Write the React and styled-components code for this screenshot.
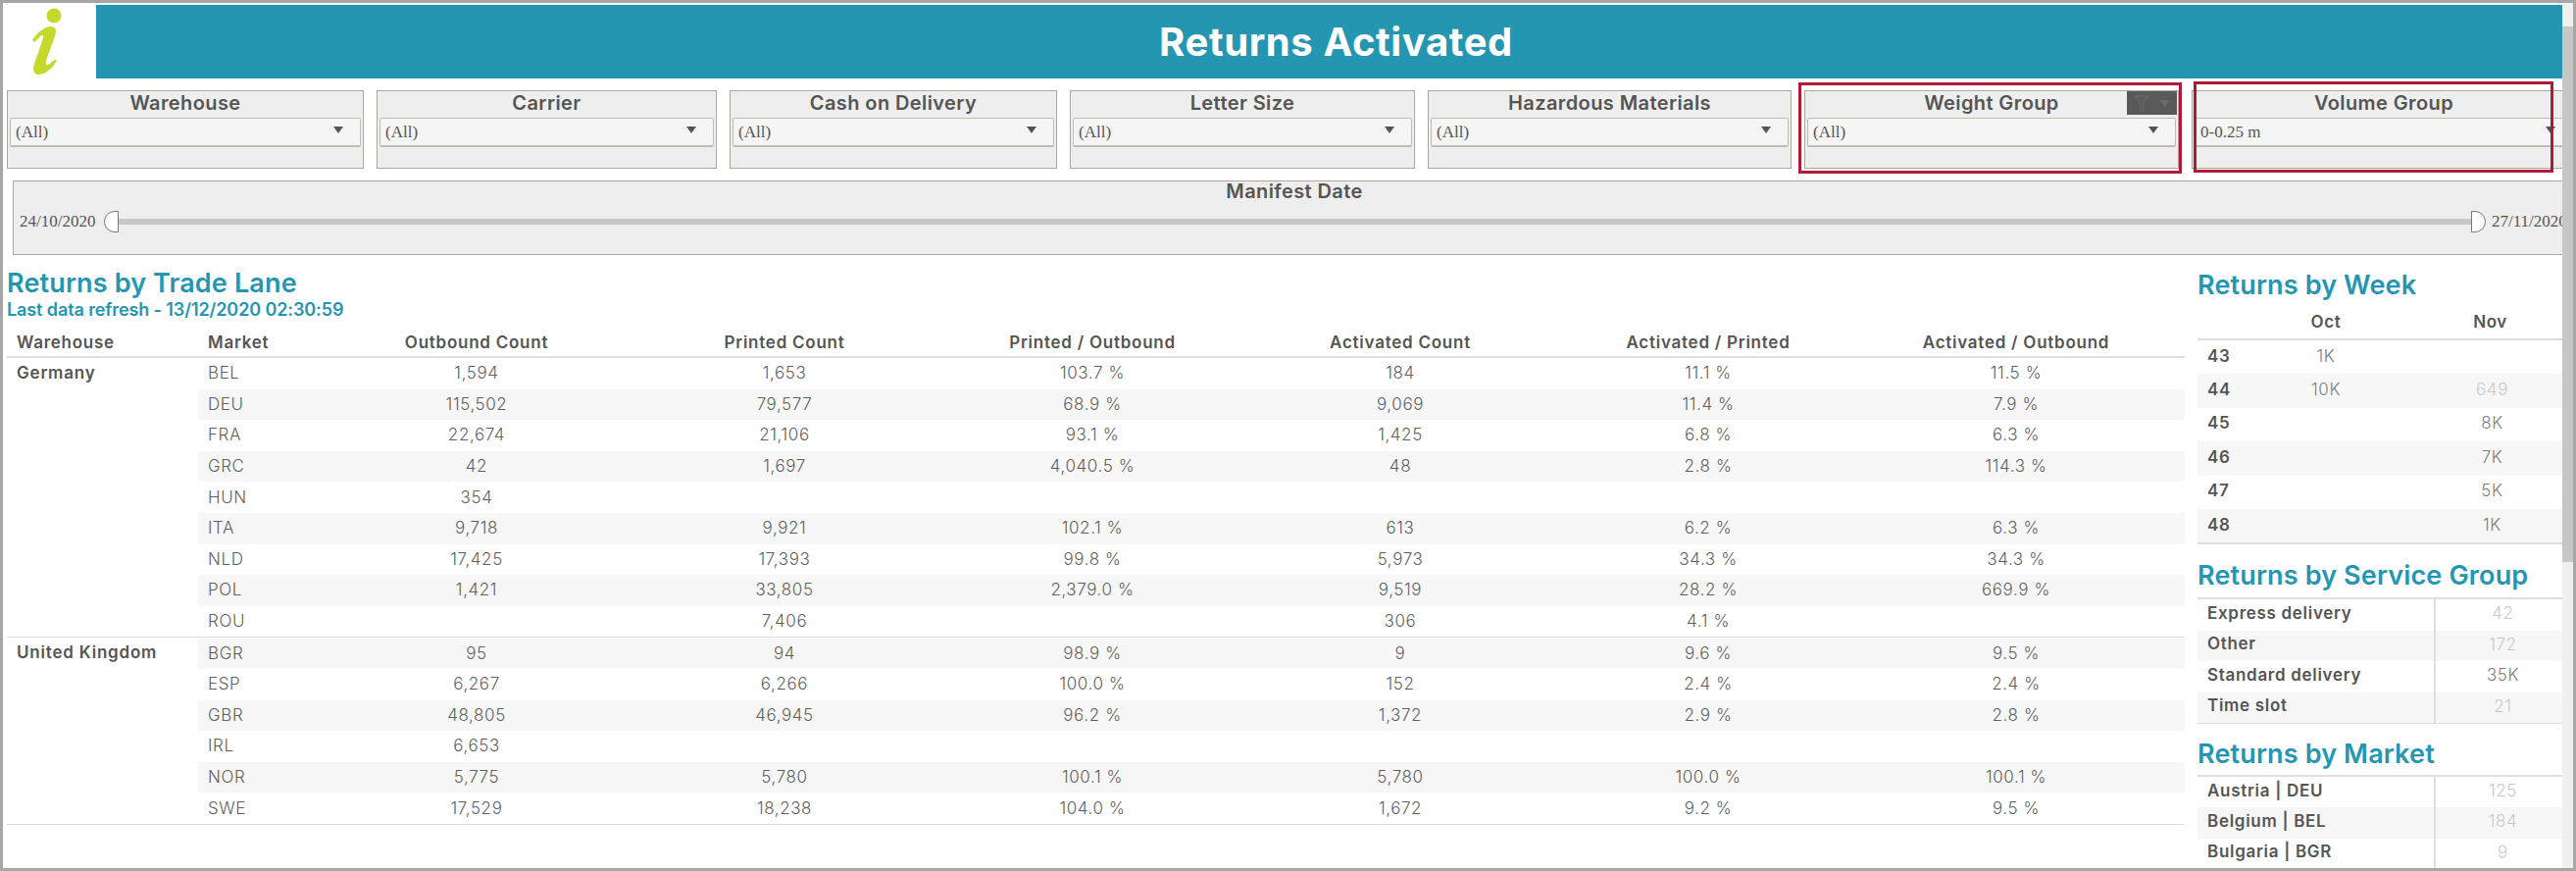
import React from "react";
import styled, { createGlobalStyle } from "styled-components";

const Global = createGlobalStyle`
  html, body { margin: 0; padding: 0; background: #fff; overflow: hidden; }
  * { box-sizing: border-box; }
`;

const SANS = `Inter, "Open Sans", "Liberation Sans", sans-serif`;
const SERIF = `"Liberation Serif", serif`;
const TEAL = "#2596b2";
const INK = "#555555";

const Page = styled.div`
  width: 2627px;
  height: 888px;
  border: 3px solid #a6a6a6;
  display: flex;
  background: #fff;
  overflow: hidden;
  font-family: ${SANS};
  color: ${INK};
`;

const Main = styled.main`
  width: 2610px;
  height: 882px;
  overflow: hidden;
  padding-top: 2px;
`;

const ScrollTrack = styled.div`
  width: 11px;
  height: 882px;
  background: #f0f0f0;
  padding-top: 24px;
`;

const ScrollThumb = styled.div`
  height: 546px;
  background: #c6c6c6;
`;

const Header = styled.header`
  display: flex;
  height: 75px;
`;

const LogoBox = styled.div`
  width: 95px;
  height: 75px;
  flex: none;
`;

const Banner = styled.div`
  flex: 1;
  background: ${TEAL};
  color: #fff;
  font-size: 40px;
  font-weight: 700;
  letter-spacing: 0.6px;
  display: flex;
  align-items: center;
  justify-content: center;
  padding-left: 14px;
`;

const FilterRow = styled.div`
  display: flex;
  gap: 13px;
  margin: 12px 0 0 4px;
  width: 2620px;
`;

const FilterCard = styled.section`
  position: relative;
  width: ${(p) => p.$width}px;
  height: 80px;
  flex: none;
  background: #eeeeee;
  border: 1px solid #a9a797;
  padding: 0 2px;
`;

const CardTitle = styled.h3`
  margin: 0;
  height: 27px;
  font-size: 20px;
  font-weight: 600;
  line-height: 25px;
  letter-spacing: 0.4px;
  text-align: center;
  color: ${INK};
`;

const Select = styled.div`
  height: 30px;
  background: #f5f5f5;
  border: 1px solid #bdbdb5;
  border-bottom-width: 2px;
  border-radius: 2px;
  display: flex;
  align-items: center;
  justify-content: space-between;
  padding: 0 17px 0 5px;
  font-family: ${SERIF};
  font-size: 17px;
  color: ${INK};
`;

const Caret = styled.span`
  width: 0;
  height: 0;
  border-left: 5px solid transparent;
  border-right: 5px solid transparent;
  border-top: 7px solid ${INK};
  margin-top: -4px;
`;

const RedFrame = styled.div`
  position: absolute;
  left: ${(p) => p.$l}px;
  right: ${(p) => p.$r}px;
  top: ${(p) => p.$t}px;
  bottom: ${(p) => p.$b}px;
  border: 3px solid #b01a38;
  pointer-events: none;
`;

const HoverTools = styled.div`
  position: absolute;
  top: 0;
  right: 1px;
  width: 51px;
  height: 24px;
  background: #595959;
  display: flex;
  align-items: center;
  justify-content: center;
  gap: 11px;
`;

const SliderCard = styled.section`
  margin: 12px 0 0 10px;
  width: 2614px;
  height: 76px;
  background: #eeeeee;
  border: 1px solid #a9a797;
`;

const SliderTitle = styled(CardTitle)`
  height: 30px;
  line-height: 21px;
`;

const SliderRow = styled.div`
  display: flex;
  align-items: center;
  height: 22px;
  padding-left: 6px;
  font-family: ${SERIF};
  font-size: 17px;
  color: ${INK};
`;

const DateText = styled.span`
  width: ${(p) => p.$width}px;
  padding-left: ${(p) => p.$inset || 0}px;
  flex: none;
  white-space: nowrap;
`;

const Handle = styled.span`
  width: 15px;
  height: 22px;
  flex: none;
  background: #fff;
  border: 1px solid #777;
  border-radius: ${(p) => (p.$side === "left" ? "11px 0 0 11px" : "0 11px 11px 0")};
`;

const Track = styled.div`
  width: 2399px;
  height: 6px;
  flex: none;
  background: #c8c8c8;
`;

const Content = styled.div`
  display: flex;
  gap: 13px;
  padding-left: 4px;
`;

const LeftPane = styled.div`
  width: 2221px;
  flex: none;
  padding-top: 13px;
`;

const RightPane = styled.aside`
  flex: 1;
  padding-top: 15px;
`;

const PaneTitle = styled.h2`
  margin: 0;
  font-size: 27px;
  line-height: 32px;
  font-weight: 600;
  letter-spacing: 0.15px;
  color: ${TEAL};
  white-space: nowrap;
`;

const Refresh = styled.div`
  font-size: 18px;
  line-height: 22px;
  font-weight: 600;
  letter-spacing: -0.1px;
  color: ${TEAL};
`;

const TradeHead = styled.div`
  height: 38px;
  padding-top: 7px;
  border-bottom: 2px solid #dedede;
  display: grid;
  grid-template-columns: 195px 127px repeat(6, 314px);
  align-items: center;
  font-size: 17px;
  font-weight: 600;
  letter-spacing: 0.75px;
`;

const HeadCell = styled.div`
  text-align: ${(p) => (p.$center ? "center" : "left")};
  padding-left: ${(p) => (p.$center ? 0 : 10)}px;
  white-space: nowrap;
`;

const Group = styled.div`
  display: grid;
  grid-template-columns: 195px 1fr;
  border-bottom: 1.5px solid #dedede;
`;

const GroupName = styled.div`
  font-size: 17px;
  font-weight: 600;
  line-height: 30px;
  letter-spacing: 0.8px;
  padding-left: 10px;
`;

const TradeRow = styled.div`
  display: grid;
  grid-template-columns: 127px repeat(6, 314px);
  height: 31.6px;
  align-items: center;
  padding-bottom: 1px;
  background: ${(p) => (p.$striped ? "#f7f7f7" : "transparent")};
  font-size: 17px;
  font-weight: 300;
  letter-spacing: 0.6px;
  color: #5f5f5f;
`;

const MarketCell = styled.div`
  padding-left: 10px;
`;

const ValueCell = styled.div`
  text-align: center;
`;

const WeekHead = styled.div`
  height: 40px;
  padding-top: 4px;
  border-bottom: 2.5px solid #dedede;
  display: grid;
  grid-template-columns: 64px 134px 173px;
  align-items: center;
  font-size: 17px;
  font-weight: 600;
  letter-spacing: 0.6px;
  text-align: center;
  & > *:nth-child(3) { padding-left: 28px; }
`;

const WeekRow = styled.div`
  display: grid;
  grid-template-columns: 64px 134px 173px;
  height: 34.4px;
  align-items: center;
  padding-bottom: 3px;
  background: ${(p) => (p.$striped ? "#f7f7f7" : "transparent")};
  font-size: 17px;
  letter-spacing: 0.6px;
  text-align: center;
  & > *:nth-child(3) { padding-left: 32px; }
`;

const RowLabel = styled.div`
  padding-left: 10px;
  font-weight: 600;
  letter-spacing: 0.7px;
  text-align: left;
  white-space: nowrap;
`;

const Measure = styled.div`
  font-weight: 300;
  color: ${(p) => (p.$faint ? "#c8c8c8" : "#7d7d7d")};
`;

const TableEnd = styled.div`
  height: 2px;
  background: #dedede;
`;

const SectionTitle = styled(PaneTitle)`
  margin-top: ${(p) => p.$top}px;
`;

const SummaryTable = styled.div`
  margin-top: ${(p) => p.$top}px;
  border-top: 2px solid #dedede;
  border-bottom: 1.5px solid #dedede;
`;

const SummaryRow = styled.div`
  display: grid;
  grid-template-columns: 241px 1fr;
  height: 31.4px;
  align-items: center;
  background: ${(p) => (p.$striped ? "#f7f7f7" : "transparent")};
  font-size: 17px;
  letter-spacing: 0.6px;
  & > *:first-child { padding-bottom: 4px; }
  & > *:last-child {
    height: 100%;
    line-height: 28px;
    border-left: 2px solid #dedede;
    padding-left: 8px;
    text-align: center;
  }
`;

const Logo = () => (
  <svg width="95" height="75" viewBox="3 5 95 75" aria-hidden="true">
    <circle cx="55" cy="16" r="7.5" fill="#c5d92d" />
    <path
      d="M33 41 C38 33 46 27 52 27 C57 27 58 31 56 37 L47 62 C46 66 48 67 51 65 C53 63 56 60 58 61 C56 67 47 76 40 76 C34 76 33 71 35 65 L44 39 C45 35 43 35 41 37 L35 43 Z"
      fill="#c5d92d"
    />
  </svg>
);

const Funnel = () => (
  <svg width="14" height="16" viewBox="0 0 14 16" aria-hidden="true">
    <path d="M1 1 H13 L8.5 7.5 V15 H5.5 V7.5 Z" fill="none" stroke="#666" strokeWidth="1.5" />
  </svg>
);

const MiniCaret = () => (
  <svg width="11" height="7" viewBox="0 0 11 7" aria-hidden="true">
    <path d="M0 0 H11 L5.5 7 Z" fill="#696969" />
  </svg>
);

const filters = [
  { id: "w", title: "Warehouse", value: "(All)", width: 364 },
  { id: "c", title: "Carrier", value: "(All)", width: 347 },
  { id: "d", title: "Cash on Delivery", value: "(All)", width: 334 },
  { id: "l", title: "Letter Size", value: "(All)", width: 352 },
  { id: "h", title: "Hazardous Materials", value: "(All)", width: 371 },
  { id: "g", title: "Weight Group", value: "(All)", width: 382, hover: true, frame: { l: -7, r: -4, t: -9, b: -6 } },
  { id: "v", title: "Volume Group", value: "0-0.25 m", width: 392, frame: { l: 1, r: 22, t: -10, b: -5 } },
];

const columns = ["Outbound Count", "Printed Count", "Printed / Outbound", "Activated Count", "Activated / Printed", "Activated / Outbound"];

const groups = [
  {
    name: "Germany",
    rows: [
      ["BEL", "1,594", "1,653", "103.7 %", "184", "11.1 %", "11.5 %"],
      ["DEU", "115,502", "79,577", "68.9 %", "9,069", "11.4 %", "7.9 %"],
      ["FRA", "22,674", "21,106", "93.1 %", "1,425", "6.8 %", "6.3 %"],
      ["GRC", "42", "1,697", "4,040.5 %", "48", "2.8 %", "114.3 %"],
      ["HUN", "354", "", "", "", "", ""],
      ["ITA", "9,718", "9,921", "102.1 %", "613", "6.2 %", "6.3 %"],
      ["NLD", "17,425", "17,393", "99.8 %", "5,973", "34.3 %", "34.3 %"],
      ["POL", "1,421", "33,805", "2,379.0 %", "9,519", "28.2 %", "669.9 %"],
      ["ROU", "", "7,406", "", "306", "4.1 %", ""],
    ],
  },
  {
    name: "United Kingdom",
    offset: 9,
    rows: [
      ["BGR", "95", "94", "98.9 %", "9", "9.6 %", "9.5 %"],
      ["ESP", "6,267", "6,266", "100.0 %", "152", "2.4 %", "2.4 %"],
      ["GBR", "48,805", "46,945", "96.2 %", "1,372", "2.9 %", "2.8 %"],
      ["IRL", "6,653", "", "", "", "", ""],
      ["NOR", "5,775", "5,780", "100.1 %", "5,780", "100.0 %", "100.1 %"],
      ["SWE", "17,529", "18,238", "104.0 %", "1,672", "9.2 %", "9.5 %"],
    ],
  },
];

const weeks = [
  ["43", "1K", ""],
  ["44", "10K", "649", true],
  ["45", "", "8K"],
  ["46", "", "7K"],
  ["47", "", "5K"],
  ["48", "", "1K"],
];

const services = [
  ["Express delivery", "42", true],
  ["Other", "172", true],
  ["Standard delivery", "35K", false],
  ["Time slot", "21", true],
];

const markets = [
  ["Austria | DEU", "125", true],
  ["Belgium | BEL", "184", true],
  ["Bulgaria | BGR", "9", true],
];

const Summary = ({ rows, top }) => (
  <SummaryTable $top={top}>
    {rows.map(([label, value, faint], i) => (
      <SummaryRow key={label} $striped={i % 2 === 1}>
        <RowLabel>{label}</RowLabel>
        <Measure $faint={faint}>{value}</Measure>
      </SummaryRow>
    ))}
  </SummaryTable>
);

export default function App() {
  return (
    <Page>
      <Global />
      <Main>
        <Header>
          <LogoBox>
            <Logo />
          </LogoBox>
          <Banner>Returns Activated</Banner>
        </Header>

        <FilterRow>
          {filters.map((f) => (
            <FilterCard key={f.id} $width={f.width}>
              <CardTitle>{f.title}</CardTitle>
              <Select>
                <span>{f.value}</span>
                <Caret />
              </Select>
              {f.hover && (
                <HoverTools>
                  <Funnel />
                  <MiniCaret />
                </HoverTools>
              )}
              {f.frame && <RedFrame $l={f.frame.l} $r={f.frame.r} $t={f.frame.t} $b={f.frame.b} />}
            </FilterCard>
          ))}
        </FilterRow>

        <SliderCard>
          <SliderTitle>Manifest Date</SliderTitle>
          <SliderRow>
            <DateText $width={86}>24/10/2020</DateText>
            <Handle $side="left" />
            <Track />
            <Handle $side="right" />
            <DateText $width={90} $inset={6}>27/11/2020</DateText>
          </SliderRow>
        </SliderCard>

        <Content>
          <LeftPane>
            <PaneTitle>Returns by Trade Lane</PaneTitle>
            <Refresh>Last data refresh - 13/12/2020 02:30:59</Refresh>
            <TradeHead>
              <HeadCell>Warehouse</HeadCell>
              <HeadCell>Market</HeadCell>
              {columns.map((c) => (
                <HeadCell key={c} $center>
                  {c}
                </HeadCell>
              ))}
            </TradeHead>
            {groups.map((g) => (
              <Group key={g.name}>
                <GroupName>{g.name}</GroupName>
                <div>
                  {g.rows.map(([market, ...values], i) => (
                    <TradeRow key={market} $striped={(i + (g.offset || 0)) % 2 === 1}>
                      <MarketCell>{market}</MarketCell>
                      {values.map((v, j) => (
                        <ValueCell key={j}>{v}</ValueCell>
                      ))}
                    </TradeRow>
                  ))}
                </div>
              </Group>
            ))}
          </LeftPane>

          <RightPane>
            <PaneTitle>Returns by Week</PaneTitle>
            <WeekHead>
              <div />
              <div>Oct</div>
              <div>Nov</div>
            </WeekHead>
            {weeks.map(([week, oct, nov, faint], i) => (
              <WeekRow key={week} $striped={i % 2 === 1}>
                <RowLabel>{week}</RowLabel>
                <Measure>{oct}</Measure>
                <Measure $faint={faint}>{nov}</Measure>
              </WeekRow>
            ))}
            <TableEnd />
            <SectionTitle $top={16}>Returns by Service Group</SectionTitle>
            <Summary rows={services} top={6} />
            <SectionTitle $top={15}>Returns by Market</SectionTitle>
            <Summary rows={markets} top={5} />
          </RightPane>
        </Content>
      </Main>
      <ScrollTrack>
        <ScrollThumb />
      </ScrollTrack>
    </Page>
  );
}
